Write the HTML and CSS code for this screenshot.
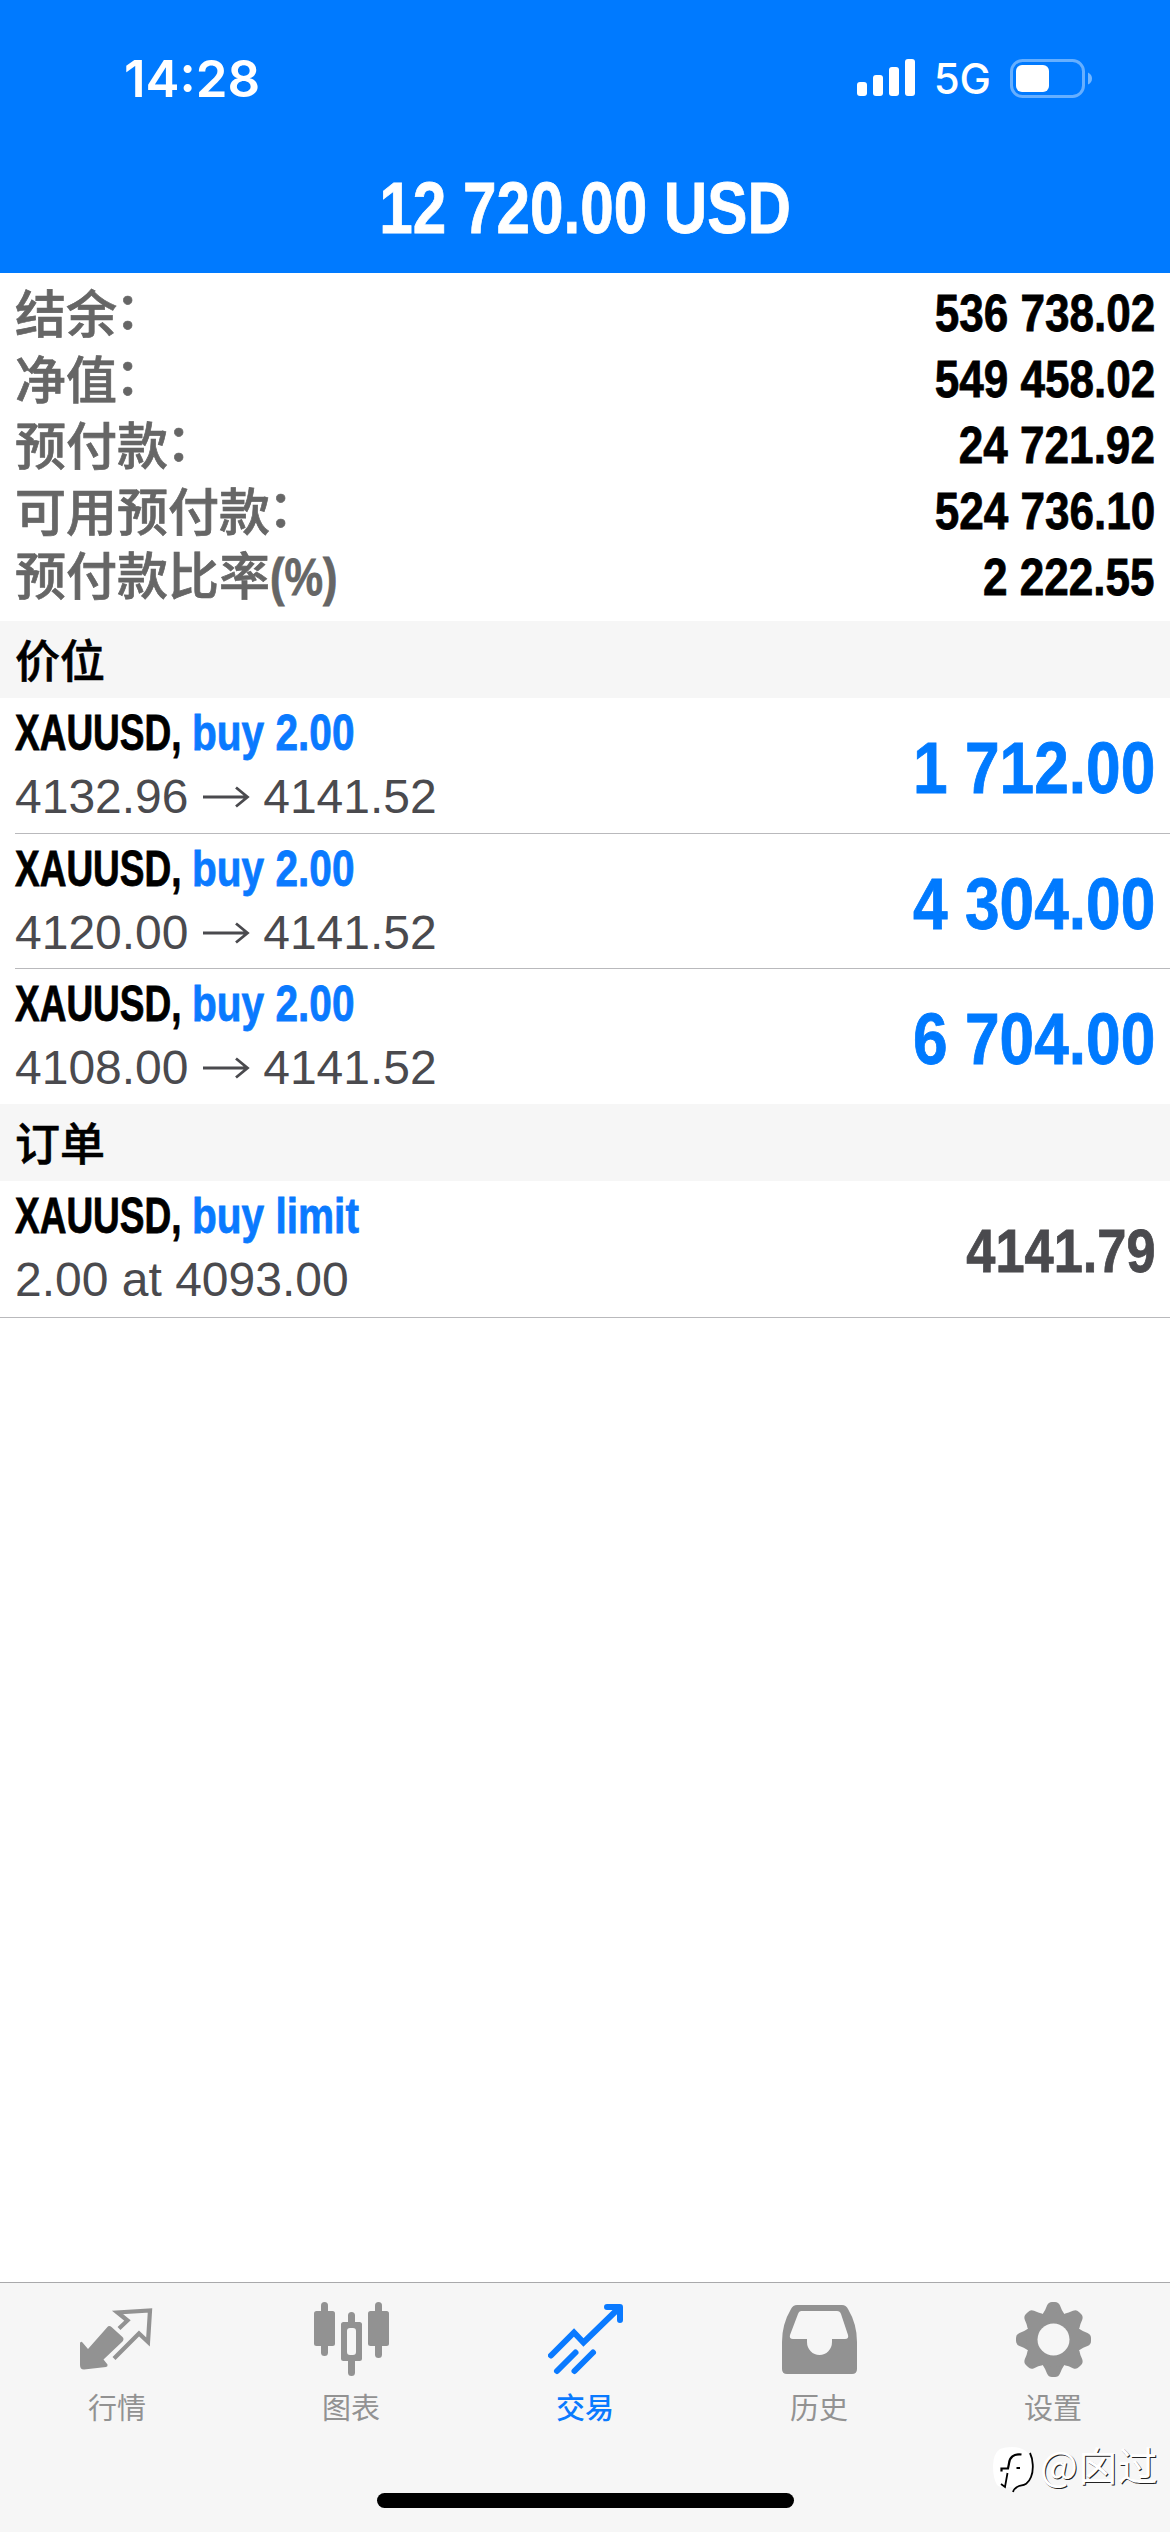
FILE: index.html
```html
<!DOCTYPE html>
<html lang="zh-CN">
<head>
<meta charset="utf-8">
<title>交易</title>
<link rel="stylesheet" href="styles.css">
</head>
<body>
<div class="screen">
  <header class="top">
    <div class="status">
      <span class="time">14:28</span>
      <div class="status-right">
        <svg class="signal" viewBox="0 0 58 38" width="58" height="38" fill="#fff"><rect x="0" y="23" width="10" height="14" rx="3"/><rect x="16" y="16" width="10" height="21" rx="3"/><rect x="32" y="8" width="10" height="29" rx="3"/><rect x="48" y="0" width="10" height="37" rx="3"/></svg>
        <span class="net">5G</span>
        <svg class="battery" viewBox="0 0 82 39" width="82" height="39"><rect x="1.5" y="1.5" width="72" height="36" rx="11" fill="none" stroke="#fff" stroke-opacity=".4" stroke-width="3"/><rect x="6" y="6" width="33" height="27" rx="6" fill="#fff"/><path d="M78 13.500q4 2 4 6t-4 6z" fill="#fff" fill-opacity=".45"/></svg>
      </div>
    </div>
    <h1 class="total"><span>12 720.00 USD</span></h1>
  </header>

  <dl class="summary">
    <div class="stat"><dt>结余<span class="colon">：</span></dt><dd>536 738.02</dd></div>
    <div class="stat"><dt>净值<span class="colon">：</span></dt><dd>549 458.02</dd></div>
    <div class="stat"><dt>预付款<span class="colon">：</span></dt><dd>24 721.92</dd></div>
    <div class="stat"><dt>可用预付款<span class="colon">：</span></dt><dd>524 736.10</dd></div>
    <div class="stat"><dt>预付款比率<span class="pct">(%)</span></dt><dd>2 222.55</dd></div>
  </dl>

  <h2 class="section">价位</h2>
  <ul class="rows">
    <li class="row">
      <div class="info">
        <div class="name"><span class="sym">XAUUSD,</span><span class="side">buy 2.00</span></div>
        <div class="detail">4132.96 <svg class="arrow" viewBox="0 0 48 22"><path d="M1 11h44M34 1.500L45.500 11 34 20.500"/></svg> 4141.52</div>
      </div>
      <div class="profit">1 712.00</div>
    </li>
    <li class="row">
      <div class="info">
        <div class="name"><span class="sym">XAUUSD,</span><span class="side">buy 2.00</span></div>
        <div class="detail">4120.00 <svg class="arrow" viewBox="0 0 48 22"><path d="M1 11h44M34 1.500L45.500 11 34 20.500"/></svg> 4141.52</div>
      </div>
      <div class="profit">4 304.00</div>
    </li>
    <li class="row">
      <div class="info">
        <div class="name"><span class="sym">XAUUSD,</span><span class="side">buy 2.00</span></div>
        <div class="detail">4108.00 <svg class="arrow" viewBox="0 0 48 22"><path d="M1 11h44M34 1.500L45.500 11 34 20.500"/></svg> 4141.52</div>
      </div>
      <div class="profit">6 704.00</div>
    </li>
  </ul>

  <h2 class="section">订单</h2>
  <ul class="rows orders">
    <li class="row">
      <div class="info">
        <div class="name"><span class="sym">XAUUSD,</span><span class="side">buy limit</span></div>
        <div class="detail">2.00 at 4093.00</div>
      </div>
      <div class="price">4141.79</div>
    </li>
  </ul>

  <nav class="tabs">
    <a class="tab">
      <svg class="icon" viewBox="0 0 75 75"><path d="M0 41q1-2 2.500-.5l5.500 6.500L27 25.500q2-2.500 4.500-.5L42.500 35q2 2 0 4.500L23.500 57.500l4 5q.5 2-1.500 2.500L4 67.500Q0 67.500 0 63z" fill="currentColor"/><path d="M39 26.500l8.500-8L37.500 10.500 70 8.500 68 40l-9-8.500L34 56.500" fill="none" stroke="currentColor" stroke-width="4.200"/></svg>
      <span>行情</span>
    </a>
    <a class="tab">
      <svg class="icon" viewBox="0 0 75 75" fill="currentColor"><rect x="7" y="0" width="7" height="54" rx="3.500"/><rect x="0" y="9" width="21" height="35" rx="2.500"/><rect x="61" y="0" width="7" height="56" rx="3.500"/><rect x="54" y="9" width="21" height="35" rx="2.500"/><path d="M34 20v-6.500a3.500 3.500 0 0 1 7 0V20h4.500q2.500 0 2.500 2.500v34q0 2.500-2.500 2.500H41v11.500a3.500 3.500 0 0 1-7 0V59h-4.500q-2.500 0-2.500-2.500v-34Q27 20 29.500 20zM36 26q-3 0-3 3v21q0 3 3 3h3q3 0 3-3V29q0-3-3-3z" fill-rule="evenodd"/></svg>
      <span>图表</span>
    </a>
    <a class="tab active">
      <svg class="icon" viewBox="0 0 75 75" fill="none" stroke="currentColor" stroke-width="6" stroke-linecap="round"><path d="M3 53.500L26 30.500 35.500 40.500 71 6"/><path d="M59 5h13v13" stroke-linejoin="round"/><path d="M9 69l18.500-18.500M26.500 69L45 50.500"/></svg>
      <span>交易</span>
    </a>
    <a class="tab">
      <svg class="icon" viewBox="0 0 75 75"><path fill-rule="evenodd" fill="currentColor" d="M15 3h45q4 0 6 4 9 15 9 33v27q0 5-5 5H5q-5 0-5-5V40Q0 22 9 7q2-4 6-4zM19.500 9Q17 9 16 12L8 33q-1 4 3 4h14v3a12.500 13 0 0 0 25 0v-3h13q4 0 3-4L59 12q-1-3-4-3z"/></svg>
      <span>历史</span>
    </a>
    <a class="tab">
      <svg class="icon" viewBox="0 0 75 75"><g fill="currentColor"><path id="tooth" d="M27 11.500Q29.500 8 31 3.500q1.500-3.500 5-3.500h3q3.500 0 5 3.500 1.500 4.500 4 8v12h-21z"/><use href="#tooth" transform="rotate(45 37.500 37.500)"/><use href="#tooth" transform="rotate(90 37.500 37.500)"/><use href="#tooth" transform="rotate(135 37.500 37.500)"/><use href="#tooth" transform="rotate(180 37.500 37.500)"/><use href="#tooth" transform="rotate(225 37.500 37.500)"/><use href="#tooth" transform="rotate(270 37.500 37.500)"/><use href="#tooth" transform="rotate(315 37.500 37.500)"/></g><circle cx="37.500" cy="37.500" r="21.500" fill="none" stroke="currentColor" stroke-width="12"/><circle cx="37.500" cy="37.500" r="16" fill="#f6f6f6"/></svg>
      <span>设置</span>
    </a>
  </nav>
  <div class="home"></div>
  <div class="mark">
    <svg class="mark-logo" viewBox="0 0 42 48" width="42" height="48"><path d="M20 1C33 1 40 8 40 20c0 14-5 19-17 22l-5-1Q8 42 5 39 1 32 1 20 1 8 8 3 13 1 20 1z" fill="#fff"/><path d="M29.500 8.500c-8-1-12 3-12.500 9l-1 5h-6.500v3" fill="none" stroke="#000" stroke-width="2.200"/><path d="M15.500 27l-2.500 14-4-3M38 7c3 6 4 17 1 24-3 8-8 8-12 9q-5 2-6 6M24.500 22h3.500" fill="none" stroke="#000" stroke-width="1.800"/></svg>
    <span>@囟过</span>
  </div>
</div>
</body>
</html>
```
FILE: styles.css
```css
* { box-sizing: border-box; margin: 0; padding: 0; }
body { width: 1170px; background: #fff; font-family: "Liberation Sans", "Noto Sans CJK SC", sans-serif; }
.screen { position: relative; width: 1170px; height: 2532px; display: flex; flex-direction: column; overflow: hidden; background: #fff; }

.top { height: 273px; background: #007aff; color: #fff; flex: none; }
.status { height: 156px; padding: 0 79px 0 124px; display: flex; align-items: center; justify-content: space-between; font-family: Inter, sans-serif; }
.time { font-size: 51px; font-weight: 600; }
.status-right { display: flex; align-items: center; }
.net { font-size: 42px; font-weight: 500; margin: 0 19px 0 19px; }
.battery { margin-right: -1px; }

/* Bold sans squeezed horizontally for the condensed figures */
.total span, .stat dd, .pct, .sym, .side, .profit, .price {
  display: inline-block; font-family: "Liberation Sans", sans-serif; font-weight: bold; white-space: nowrap;
  -webkit-text-stroke: .8px currentColor;
}
.total { text-align: center; font-size: 72px; line-height: 105px; }
.total span { transform: scaleX(.836); }

.summary { height: 348px; padding: 7px 15px 0; flex: none; }
.stat { height: 66px; display: flex; align-items: center; justify-content: space-between; white-space: nowrap; }
.stat dt { font: 500 51px/52px "Noto Sans CJK SC", sans-serif; color: #666; margin-top: -5px; -webkit-text-stroke: .7px currentColor; }
.stat dd { font-size: 51px; line-height: 52px; margin-top: 2px; color: #000; transform: scaleX(.864); transform-origin: 100% 50%; }
.colon { display: inline-block; line-height: 50px; transform: translate(-2px, -4px); }
.pct { font-size: 51px; line-height: 50px; transform: scaleX(.85); transform-origin: 0 50%; }

.section { height: 77px; flex: none; padding-left: 15px; background: #f6f6f6; font: 500 45px/75px "Noto Sans CJK SC", sans-serif; color: #000; -webkit-text-stroke: .6px currentColor; }

.rows { list-style: none; flex: none; }
.row { height: 135px; margin-left: 15px; padding-right: 15px; display: flex; justify-content: space-between; border-bottom: 1px solid #b9b9bc; white-space: nowrap; }
.row:first-child { height: 136px; }
.row:last-child { border-bottom-color: transparent; }
.orders .row:first-child { margin-left: 0; padding-left: 15px; height: 137px; border-bottom-color: #b9b9bc; }
.info { padding-top: 3px; }
.name { display: flex; font-size: 50px; line-height: 64px; }
.sym { width: 177px; color: #000; transform: scaleX(.74); transform-origin: 0 50%; }
.side { color: #0a7aff; transform: scaleX(.812); transform-origin: 0 50%; }
.detail { font-size: 48px; line-height: 63px; color: #4a4a4e; }
.arrow { width: 48px; height: 22px; vertical-align: 5px; fill: none; stroke: currentColor; stroke-width: 2.800; }
.profit { font-size: 72px; line-height: 141px; color: #007aff; transform: scaleX(.864); transform-origin: 100% 50%; }
.price { font-size: 61px; line-height: 141px; color: #4a4a4e; transform: scaleX(.858); transform-origin: 100% 50%; }

.tabs { height: 250px; margin-top: auto; flex: none; display: grid; grid-template-columns: repeat(5, 1fr); border-top: 1px solid #a9a9ab; background: #f6f6f6; }
.tab { display: flex; flex-direction: column; align-items: center; padding-top: 19px; color: #929292; }
.tab.active { color: #0a7aff; }
.tab span { margin-top: 7px; font: 400 29px/44px "Noto Sans CJK SC", sans-serif; }
.tab.active span { font-weight: 500; }
.icon { width: 75px; height: 75px; display: block; }
.home { position: absolute; left: 377px; top: 2493px; width: 417px; height: 15px; border-radius: 8px; background: #000; }
.mark { position: absolute; left: 992px; top: 2446px; display: flex; align-items: flex-start; gap: 6px; height: 48px; }
.mark span { margin-top: -6px; font: 400 40px/48px "Noto Sans CJK SC", sans-serif; color: #fff; text-shadow: 1px 1px 0 #222; }
```
